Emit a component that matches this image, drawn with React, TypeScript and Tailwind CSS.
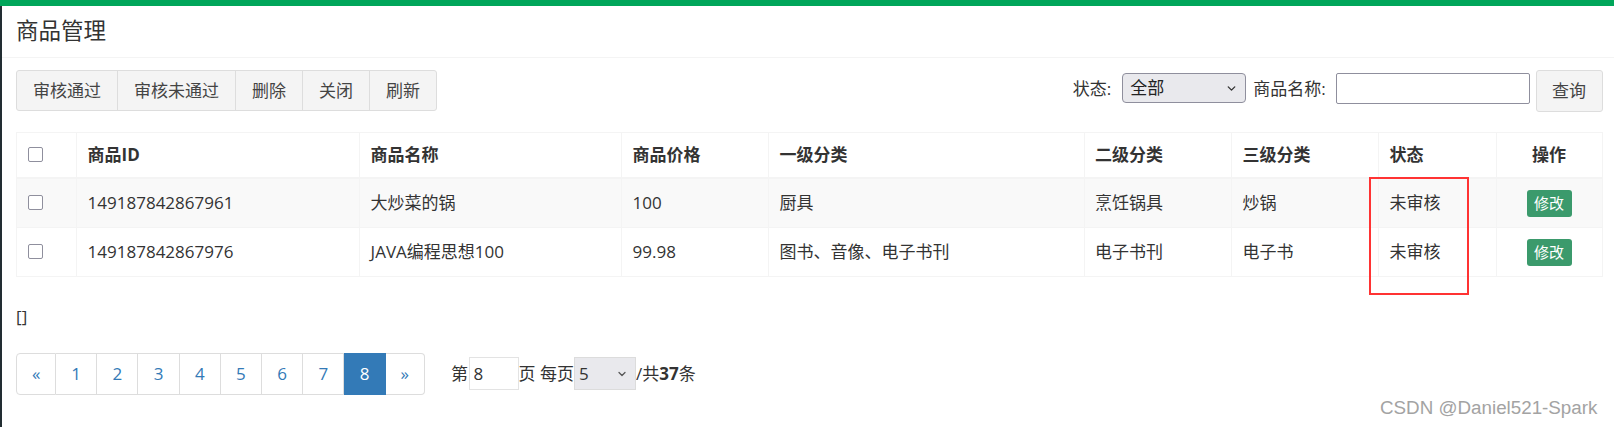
import { ChevronDown } from 'lucide-react'

const rows = [
  {
    id: '149187842867961',
    name: '大炒菜的锅',
    price: '100',
    cat1: '厨具',
    cat2: '烹饪锅具',
    cat3: '炒锅',
    status: '未审核',
  },
  {
    id: '149187842867976',
    name: 'JAVA编程思想100',
    price: '99.98',
    cat1: '图书、音像、电子书刊',
    cat2: '电子书刊',
    cat3: '电子书',
    status: '未审核',
  },
]

const toolButtons = ['审核通过', '审核未通过', '删除', '关闭', '刷新']
const pages = ['1', '2', '3', '4', '5', '6', '7', '8']

function Checkbox() {
  return (
    <input
      type="checkbox"
      className="block h-[15px] w-[15px] appearance-none rounded-[2px] border-[1.5px] border-[#8f8f9d] bg-white"
    />
  )
}

export default function App() {
  return (
    <div className="relative h-[427px] w-[1614px] overflow-hidden bg-white text-[17px] text-[#333] [font-family:'Open_Sans','Noto_Sans_CJK_SC',sans-serif]">
      <div className="h-[6px] bg-[#00a65a]" />
      <div className="flex h-[421px]">
        <div className="w-[3px] bg-[#222d32]" />
        <div className="flex-1">
          {/* title */}
          <div className="flex h-[52px] items-center border-b border-[#f4f4f4] pl-[13.5px]">
            <h1 className="text-[22.5px] leading-none text-[#333]">商品管理</h1>
          </div>

          <div className="pl-[13.7px] pr-[11.4px]">
            {/* toolbar */}
            <div className="mt-[12px] flex h-[42px] items-start justify-between">
              <div className="flex h-[41px] overflow-hidden rounded-[3px] border border-[#ddd] bg-[#f4f4f4] text-[#444]">
                {toolButtons.map((b, i) => (
                  <button
                    key={b}
                    type="button"
                    className={`px-[16px] leading-[39px] ${i > 0 ? 'border-l border-[#ddd]' : ''}`}
                  >
                    {b}
                  </button>
                ))}
              </div>

              <div className="flex items-start">
                <span className="mt-[7px] leading-[24px]">状态:</span>
                <div className="relative ml-[11px] mt-[3px]">
                  <select className="block h-[30px] w-[124px] appearance-none rounded-[4px] border border-[#8f8f9d] bg-[#e9e9ed] pl-[7px] text-[17px] leading-[28px] text-[#222]">
                    <option>全部</option>
                  </select>
                  <ChevronDown
                    className="pointer-events-none absolute right-[8px] top-[9px] h-[13px] w-[13px] text-[#333]"
                    strokeWidth={2.5}
                  />
                </div>
                <span className="ml-[7px] mt-[7px] leading-[24px]">商品名称:</span>
                <input
                  type="text"
                  className="ml-[10px] mt-[3px] h-[30.5px] w-[194.5px] rounded-[2px] border border-[#8f8f9d] bg-white"
                />
                <button
                  type="button"
                  className="ml-[5.5px] h-[42px] w-[67px] rounded-[3px] border border-[#ddd] bg-[#f4f4f4] leading-[40px] text-[#444]"
                >
                  查询
                </button>
              </div>
            </div>

            {/* table */}
            <table className="mt-[20px] w-[1586px] table-fixed border-collapse border border-[#f4f4f4]">
              <colgroup>
                <col className="w-[60px]" />
                <col className="w-[283px]" />
                <col className="w-[262px]" />
                <col className="w-[147px]" />
                <col className="w-[315.5px]" />
                <col className="w-[147.5px]" />
                <col className="w-[147px]" />
                <col className="w-[117.5px]" />
                <col className="w-[106px]" />
              </colgroup>
              <thead>
                <tr className="h-[45px] border-b-2 border-[#f4f4f4] text-left font-bold">
                  <th className="border-r border-[#f4f4f4] px-[10.5px]">
                    <Checkbox />
                  </th>
                  <th className="border-r border-[#f4f4f4] px-[10.5px]">商品ID</th>
                  <th className="border-r border-[#f4f4f4] px-[10.5px]">商品名称</th>
                  <th className="border-r border-[#f4f4f4] px-[10.5px]">商品价格</th>
                  <th className="border-r border-[#f4f4f4] px-[10.5px]">一级分类</th>
                  <th className="border-r border-[#f4f4f4] px-[10.5px]">二级分类</th>
                  <th className="border-r border-[#f4f4f4] px-[10.5px]">三级分类</th>
                  <th className="border-r border-[#f4f4f4] px-[10.5px]">状态</th>
                  <th className="px-[10.5px] text-center">操作</th>
                </tr>
              </thead>
              <tbody>
                {rows.map((r, i) => (
                  <tr
                    key={r.id}
                    className={`border-b border-[#f4f4f4] ${i === 0 ? 'h-[50px] bg-[#f9f9f9]' : 'h-[48.5px] bg-white'}`}
                  >
                    <td className="border-r border-[#f4f4f4] px-[10.5px]">
                      <Checkbox />
                    </td>
                    <td className="border-r border-[#f4f4f4] px-[10.5px]">{r.id}</td>
                    <td className="border-r border-[#f4f4f4] px-[10.5px]">{r.name}</td>
                    <td className="border-r border-[#f4f4f4] px-[10.5px]">{r.price}</td>
                    <td className="border-r border-[#f4f4f4] px-[10.5px]">{r.cat1}</td>
                    <td className="border-r border-[#f4f4f4] px-[10.5px]">{r.cat2}</td>
                    <td className="border-r border-[#f4f4f4] px-[10.5px]">{r.cat3}</td>
                    <td className="border-r border-[#f4f4f4] px-[10.5px]">{r.status}</td>
                    <td className="px-[10.5px] text-center">
                      <button
                        type="button"
                        className="inline-block h-[27px] w-[45px] rounded-[3px] bg-[#3b9a6c] align-middle text-[15px] leading-[27px] text-white"
                      >
                        修改
                      </button>
                    </td>
                  </tr>
                ))}
              </tbody>
            </table>

            <p className="mt-[28px] leading-[24px]">[]</p>

            {/* pagination */}
            <div className="mt-[24px] flex items-center">
              <ul className="flex h-[42px] text-[#337ab7]">
                <li className="flex w-[40px] items-center justify-center rounded-l-[4px] border border-[#ddd]">
                  «
                </li>
                {pages.map((p) => (
                  <li
                    key={p}
                    className={`flex w-[41.2px] items-center justify-center border-y border-r ${
                      p === '8'
                        ? 'border-[#337ab7] bg-[#337ab7] text-white'
                        : 'border-[#ddd]'
                    }`}
                  >
                    {p}
                  </li>
                ))}
                <li className="flex w-[39px] items-center justify-center rounded-r-[4px] border-y border-r border-[#ddd]">
                  »
                </li>
              </ul>

              <div className="ml-[26.5px] flex items-center">
                <span>第</span>
                <input
                  type="text"
                  defaultValue="8"
                  className="ml-[0.5px] h-[33px] w-[50px] border border-[#e3e3e3] bg-white pl-[4px] text-[17px] text-[#333]"
                />
                <span>页 每页</span>
                <div className="relative">
                  <select className="block h-[33px] w-[62px] appearance-none border border-[#dcdcdc] bg-[#e9e9ed] pl-[4px] text-[17px] text-[#333]">
                    <option>5</option>
                  </select>
                  <ChevronDown
                    className="pointer-events-none absolute right-[8px] top-[11px] h-[12px] w-[12px] text-[#555]"
                    strokeWidth={2.5}
                  />
                </div>
                <span>
                  /共<b>37</b>条
                </span>
              </div>
            </div>
          </div>
        </div>
      </div>

      {/* red highlight box */}
      <div className="pointer-events-none absolute left-[1369px] top-[177px] h-[118px] w-[100px] border-2 border-[#f33]" />

      {/* watermark */}
      <div className="pointer-events-none absolute left-[1380px] top-[399px] text-[18.8px] leading-none text-[#a3a3a3] [font-family:'Liberation_Sans',sans-serif] [text-shadow:0_0_1px_#fff]">
        CSDN @Daniel521-Spark
      </div>
    </div>
  )
}
